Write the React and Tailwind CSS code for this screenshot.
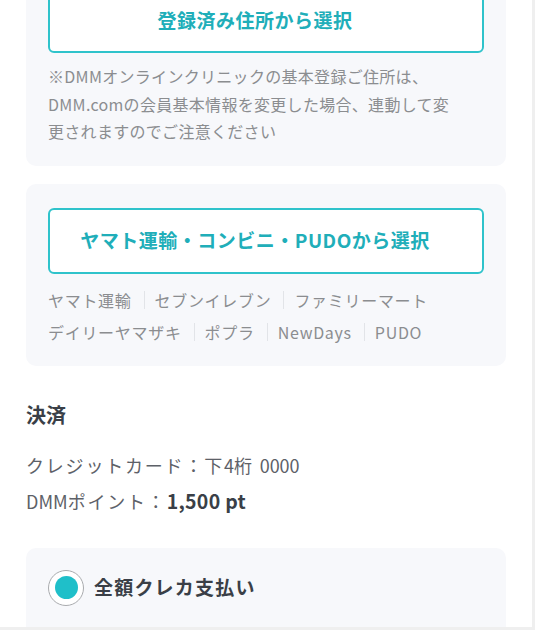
// 配送先・決済セクション
const font = { fontFamily: '"Noto Sans CJK JP", "Noto Sans", sans-serif' };

const Sep = () => <span className="ml-[12px] mr-[10px] h-[18px] w-px bg-[#e2e4e8]" />;

const App = () => {
    return (
        <div className="h-[640px] w-[547px] overflow-hidden bg-white" style={font}>
            <div className="h-[630px] w-[535px] overflow-hidden border-r-[3px] border-b-[3px] border-[#efefef] px-[26px]">
                {/* 登録済み住所 */}
                <div className="-mt-[37px] rounded-[10px] bg-[#f7f8fb] px-[22px] pt-[24px] pb-[20px]">
                    <button className="flex h-[66px] w-full items-center justify-center rounded-[6px] border-[2.5px] border-[#2fc3cb] bg-white pr-[22px] text-[19px] font-bold tracking-[0.5px] text-[#20aeb9]">
                        登録済み住所から選択
                    </button>
                    <p className="mt-[10px] text-[16px] leading-[27.5px] tracking-[0.3px] text-[#8b8d90]">
                        ※DMMオンラインクリニックの基本登録ご住所は、<br />
                        DMM.comの会員基本情報を変更した場合、連動して変<br />
                        更されますのでご注意ください
                    </p>
                </div>

                {/* コンビニ受取 */}
                <div className="mt-[18px] rounded-[10px] bg-[#f7f8fb] px-[22px] pt-[24px] pb-[18px]">
                    <button className="flex h-[66px] w-full items-center justify-center rounded-[6px] border-[2.5px] border-[#2fc3cb] bg-white pr-[22px] text-[19px] font-bold tracking-[0.5px] text-[#20aeb9]">
                        ヤマト運輸・コンビニ・PUDOから選択
                    </button>
                    <div className="mt-[10px] text-[16px] leading-[32px] tracking-[0.7px] text-[#8b8d90]">
                        <div className="flex items-center">
                            <span>ヤマト運輸</span>
                            <Sep />
                            <span>セブンイレブン</span>
                            <Sep />
                            <span>ファミリーマート</span>
                        </div>
                        <div className="flex items-center">
                            <span>デイリーヤマザキ</span>
                            <Sep />
                            <span>ポプラ</span>
                            <Sep />
                            <span>NewDays</span>
                            <Sep />
                            <span>PUDO</span>
                        </div>
                    </div>
                </div>

                {/* 決済 */}
                <h2 className="mt-[34px] text-[20px] font-bold leading-[30px] text-[#3a3f47]">決済</h2>
                <div className="mt-[18px] text-[18px] leading-[35px] tracking-[1.8px] text-[#5d6168]">
                    <p>
                        クレジットカード：下<span className="tracking-normal">4</span>桁 <span className="tracking-normal">0000</span>
                    </p>
                    <p>
                        <span className="tracking-normal">DMM</span>ポイント：<span className="text-[19.5px] font-bold tracking-[0.3px] text-[#3a3f47]">1,500 pt</span>
                    </p>
                </div>

                <div className="mt-[29px] h-[120px] rounded-[10px] bg-[#f7f8fb] px-[22px] pt-[22px]">
                    <label className="flex items-center">
                        <span className="flex h-[36px] w-[36px] items-center justify-center rounded-full border-[1.5px] border-[#a9abae] bg-white">
                            <span className="h-[23px] w-[23px] rounded-full bg-[#1fbfc9]" />
                        </span>
                        <span className="ml-[10px] text-[19px] font-bold tracking-[1.2px] text-[#3a3f47]">
                            全額クレカ支払い
                        </span>
                    </label>
                </div>
            </div>
        </div>
    );
};

export default App;
